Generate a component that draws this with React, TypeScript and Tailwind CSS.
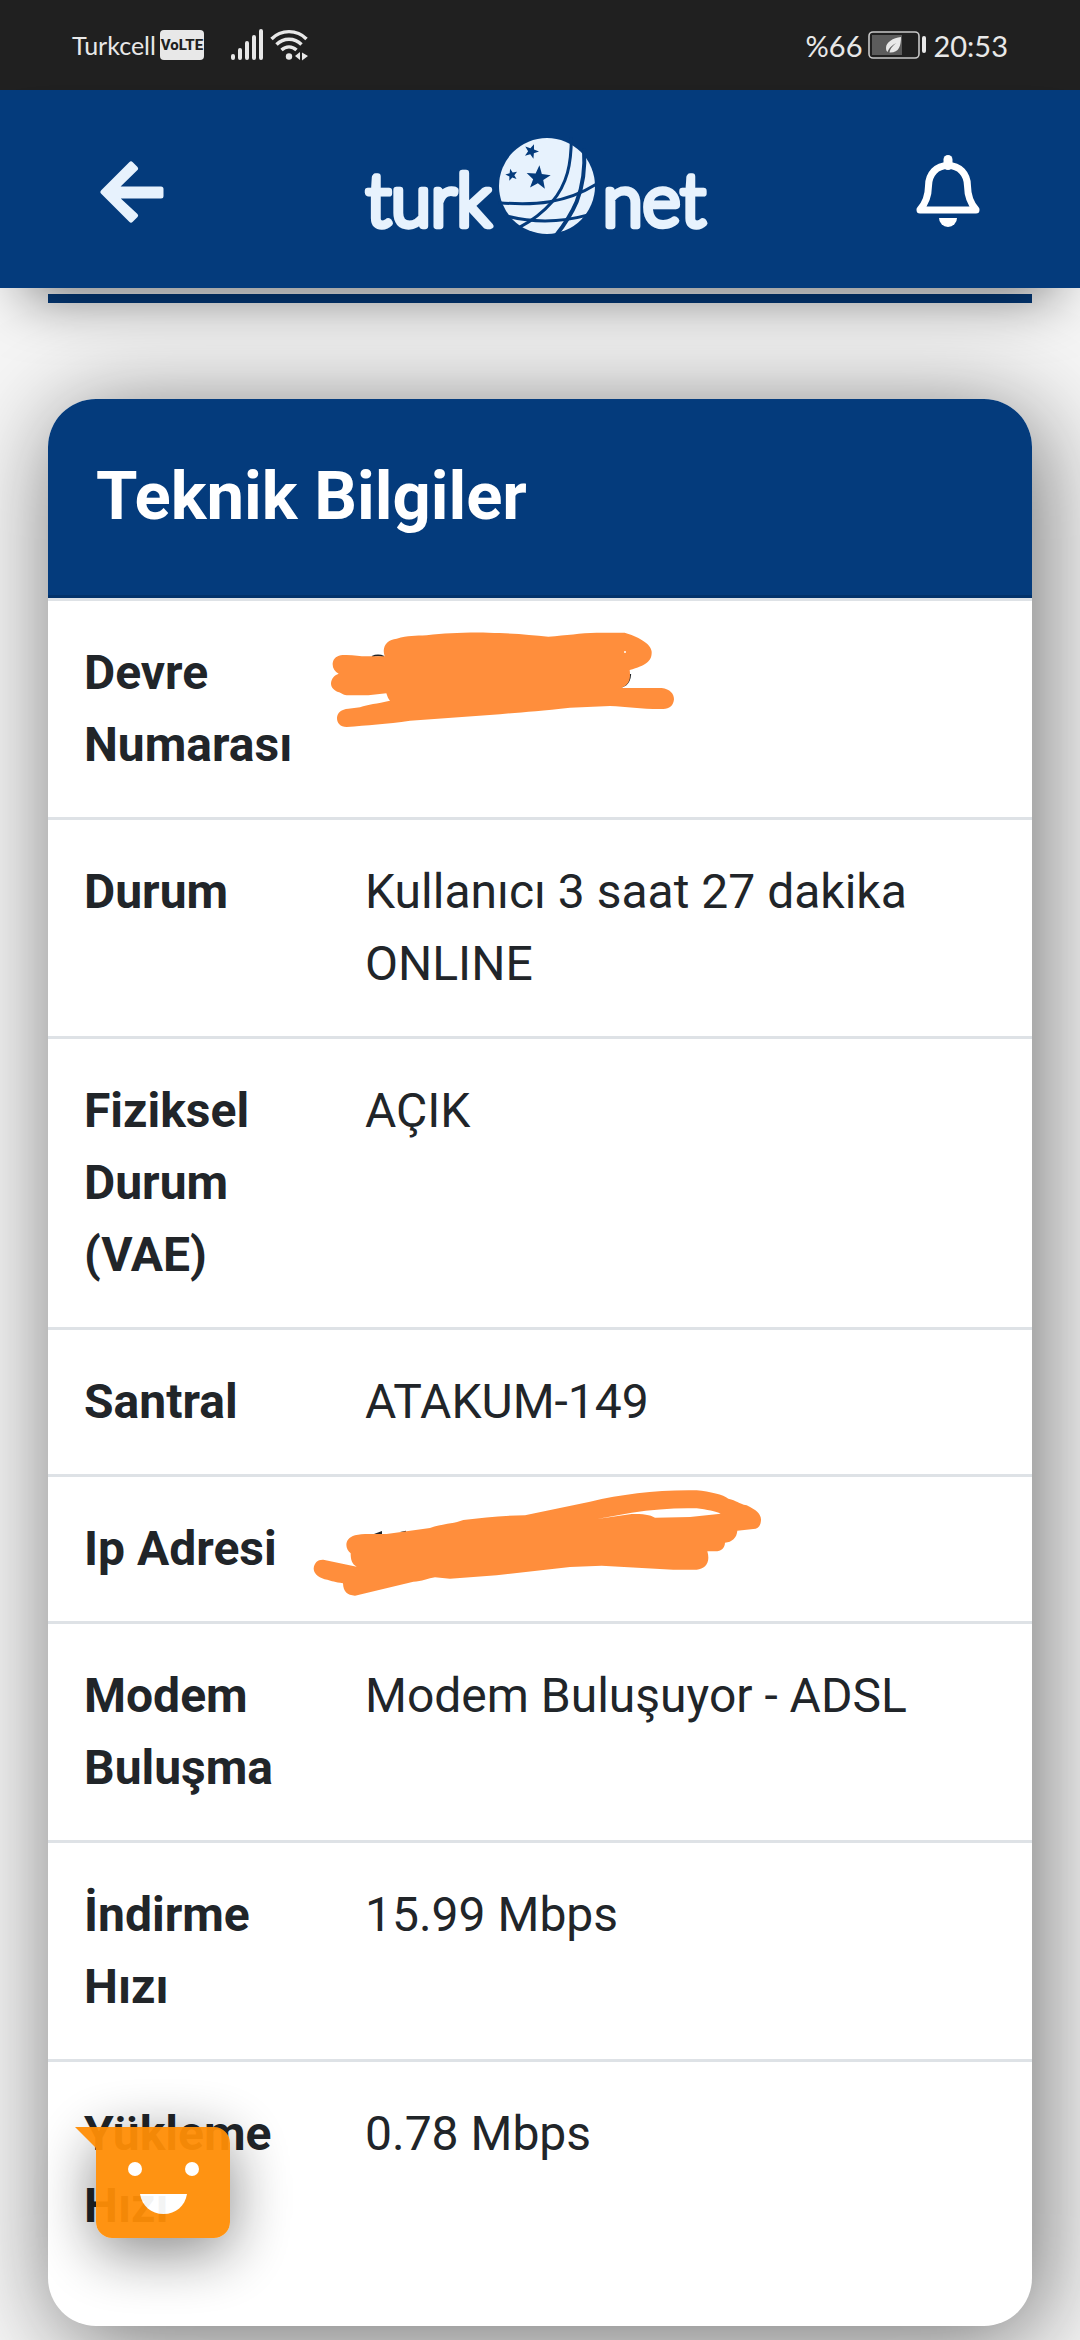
import React from 'react';

type Row = {
  label: string;
  value?: string;
  scribble?: 'circuit' | 'ip';
};

const rows: Row[] = [
  { label: 'Devre Numarası', scribble: 'circuit' },
  { label: 'Durum', value: 'Kullanıcı 3 saat 27 dakika ONLINE' },
  { label: 'Fiziksel Durum (VAE)', value: 'AÇIK' },
  { label: 'Santral', value: 'ATAKUM-149' },
  { label: 'Ip Adresi', scribble: 'ip' },
  { label: 'Modem Buluşma', value: 'Modem Buluşuyor - ADSL' },
  { label: 'İndirme Hızı', value: '15.99 Mbps' },
  { label: 'Yükleme Hızı', value: '0.78 Mbps' },
];

const starPoints = (cx: number, cy: number, r: number, tilt: number) =>
  Array.from({ length: 10 }, (_, i) => {
    const radius = i % 2 === 0 ? r : r * 0.42;
    const angle = ((i * 36 - 90 + tilt) * Math.PI) / 180;
    return `${(cx + radius * Math.cos(angle)).toFixed(1)},${(cy + radius * Math.sin(angle)).toFixed(1)}`;
  }).join(' ');

const SignalIcon = () => (
  <svg width="36" height="32" viewBox="0 0 36 32" stroke="#e8e8e8" strokeWidth="4" strokeLinecap="round" aria-hidden="true">
    <path d="M3 27v2M10 21v8M17 14v15M24 8v21M31 2v27" />
  </svg>
);

const WifiIcon = () => (
  <svg width="38" height="32" viewBox="0 0 38 32" fill="none" stroke="#e8e8e8" strokeWidth="3.4" aria-hidden="true">
    <path d="M1.5 10C11 .2 27 .2 36.500 10M6.500 15.500c7-7 18-7 25 0M11.500 21c4.500-4.200 10.500-4.200 15 0" />
    <circle cx="19" cy="27.500" r="3.200" fill="#e8e8e8" stroke="none" />
    <path d="M30 23v8l-5-4zM32 23.500l6 3.500-6 4.500z" fill="#e8e8e8" stroke="none" />
  </svg>
);

const BatteryIcon = () => (
  <svg width="59" height="28" viewBox="0 0 59 28" aria-hidden="true">
    <rect x="1" y="1" width="50" height="26" rx="4" fill="none" stroke="#c8c8c8" strokeWidth="1.600" />
    <rect x="4" y="4" width="30" height="20" fill="#5c5c5c" />
    <path d="M33 6c-8 1-15 5-15 11 0 2 .5 3 1.500 4 2-5 5-7 9-9-4 3-6 5-7 9.500C31 22 33 15 33 6z" fill="#e8e8e8" />
    <rect x="54" y="5" width="4" height="17" rx="2" fill="#e8e8e8" />
  </svg>
);

const BackIcon = () => (
  <svg width="64" height="64" viewBox="0 0 64 64" aria-hidden="true">
    <path
      d="M3 32 31 4l4.500 4.500L14.500 29H61v7H14.500l21 19.500L31 60z"
      fill="#e7f2fd"
      stroke="#e7f2fd"
      strokeWidth="5"
      strokeLinejoin="round"
    />
  </svg>
);

const BellIcon = () => (
  <svg width="64" height="74" viewBox="0 0 64 74" aria-hidden="true">
    <path
      d="M4 54.500C9 49 12.300 43 12.500 31c0-12 8-20.500 19.500-20.500S51.500 19 51.500 31C51.700 43 55 49 60 54.500v.5H4z"
      fill="none"
      stroke="#fff"
      strokeWidth="7"
      strokeLinejoin="round"
    />
    <path d="M32 4.500v6" stroke="#fff" strokeWidth="9" strokeLinecap="round" />
    <path d="M23 63h18a9 9 0 0 1-18 0z" fill="#fff" />
  </svg>
);

const Logo = () => (
  <svg width="352" height="112" viewBox="72 48 1056 336" className="overflow-visible" role="img" aria-label="turknet">
    <g
      fill="#e7f2fd"
      stroke="#e7f2fd"
      strokeWidth="19"
      strokeLinejoin="round"
      fontFamily="Lato, sans-serif"
      fontWeight="300"
      fontSize="218"
    >
      <text x="78" y="317">turk</text>
      <text x="788" y="317">net</text>
    </g>
    <circle cx="621" cy="198" r="144" fill="#e7f2fd" />
    <g fill="none" stroke="#043b7c" strokeWidth="9">
      <path d="M694 52c0 80-12 140-58 194-26 30-56 54-98 76" />
      <path d="M732 85c4 60-4 115-22 160-16 38-36 68-64 104" strokeWidth="12" />
      <path d="M476 248c110 9 200 2 294-56" />
      <path d="M492 286c80 22 170 22 256-2" />
    </g>
    <g fill="#043b7c">
      <polygon points={starPoints(595, 174, 38, 5)} />
      <polygon points={starPoints(574, 94, 23, 20)} />
      <polygon points={starPoints(515, 165, 19, -14)} />
    </g>
  </svg>
);

const CircuitScribble = () => (
  <svg className="absolute left-0 top-[30px]" width="347" height="100" viewBox="87 93 1041 300" aria-hidden="true">
    <path d="M216 170q18-8 36 0M944 260q44 6 47-38" fill="none" stroke="#212529" strokeWidth="5" />
    <path
      d="M128 165C160 163 180 170 205 169L254 169C244 140 262 118 290 116C325 106 345 108 380 106C440 100 480 97 565 98C640 100 690 104 745 110C800 106 840 99 890 98L974 98C1010 108 1054 130 1055 155C1056 182 1040 196 989 210C992 235 990 252 964 264L1085 264C1110 268 1122 280 1122 298C1120 318 1108 326 1090 327C1030 328 980 320 930 318L810 323C720 334 660 336 600 343L330 362C260 372 200 376 140 381C120 380 111 370 111 354C112 336 124 328 145 326L180 322C205 312 230 312 270 302C264 296 262 288 259 280L205 286L140 286C128 285 124 278 114 276C100 270 93 262 93 250C94 236 102 226 116 221C104 214 97 204 98 190C100 174 112 166 128 165Z"
      fill="#ff8e3c"
    />
    <circle cx="975" cy="156" r="3" fill="#fff" />
  </svg>
);

const IpScribble = () => (
  <svg className="absolute -left-4 top-[10px]" width="450" height="110" viewBox="69 51 1350 330" aria-hidden="true">
    <path d="M252 192l24-9v12zM330 186l18-4v6z" fill="#212529" />
    <path
      d="M195 196C215 190 235 192 290 192L420 174C460 160 490 162 520 150C580 144 640 136 705 136L900 95C1000 72 1100 59 1220 61C1260 65 1300 74 1315 86C1340 92 1345 100 1370 106C1400 120 1414 134 1413 150C1412 168 1404 177 1390 177L1342 182C1340 204 1326 216 1305 218C1304 234 1295 244 1275 244L1252 244C1262 278 1246 296 1220 299L1150 299L935 287L840 291L620 316L480 326L435 322C415 325 395 335 370 335L195 377C172 376 160 366 159 340C135 335 125 334 112 329C90 325 72 314 71 296C72 278 84 268 100 269L200 290C186 283 182 270 182 250C164 236 162 206 195 196Z"
      fill="#ff8e3c"
    />
    <path d="M1025 128C1090 118 1160 113 1220 115C1250 119 1278 124 1292 131L1200 141L1095 143C1080 134 1060 132 1025 132L921 147Z" fill="#fff" />
  </svg>
);

const StatusBar = () => (
  <div className="flex h-[90px] items-center justify-between bg-[#202020] px-[72px] font-['Lato',sans-serif] text-[#e8e8e8]">
    <div className="flex items-center">
      <span className="text-[25px] leading-none">Turkcell</span>
      <span className="ml-1 flex h-[30px] w-11 items-center justify-center rounded bg-[#e8e8e8] font-['Roboto',sans-serif] text-[15px] font-extrabold leading-none text-[#202020]">
        VoLTE
      </span>
      <div className="ml-[26px] flex items-center gap-1">
        <SignalIcon />
        <WifiIcon />
      </div>
    </div>
    <div className="flex items-center gap-1.5 text-[29px] leading-none">
      <span>%66</span>
      <BatteryIcon />
      <span>20:53</span>
    </div>
  </div>
);

const ChatButton = () => (
  <button
    type="button"
    aria-label="Sohbet"
    className="fixed bottom-[102px] left-[75px] z-20 flex h-[111px] w-[155px] pl-[21px] opacity-95"
  >
    <span className="h-full w-full rounded-2xl shadow-[0_14px_60px_rgba(0,0,0,0.5)]" />
    <svg className="absolute inset-0" width="155" height="111" viewBox="0 0 155 111" aria-hidden="true">
      <path d="M0 0h139a16 16 0 0 1 16 16v79a16 16 0 0 1-16 16H37a16 16 0 0 1-16-16V21z" fill="#ff8e06" />
      <circle cx="60" cy="42" r="7" fill="#fff" />
      <circle cx="117" cy="42" r="7" fill="#fff" />
      <path d="M65 67h47c-2 12-11 20-23.500 20S67 79 65 67z" fill="#fff" />
    </svg>
  </button>
);

export default function App() {
  return (
    <div className="min-h-screen bg-[#f6f6f6] pb-[14px] font-['Roboto',sans-serif] text-[#212529]">
      <div className="relative z-10">
        <StatusBar />
        <header className="flex h-[198px] items-center justify-between bg-[#043b7c] px-[100px] pt-[6px] shadow-[0_36px_56px_-26px_rgba(0,0,0,0.5)]">
          <button type="button" aria-label="Geri">
            <BackIcon />
          </button>
          <Logo />
          <button type="button" aria-label="Bildirimler">
            <BellIcon />
          </button>
        </header>
      </div>

      <main className="px-12">
        <div className="mt-[6px] h-[9px] bg-[#043b7c]" />

        <section className="mt-24 rounded-[48px] bg-white pb-12 shadow-[8px_14px_100px_rgba(0,0,0,0.55)]">
          <h2 className="rounded-t-[48px] border-b-[3px] border-[#03326a] bg-[#043b7c] px-12 pb-[59px] pt-[57px] text-[67px] font-bold leading-[80px] text-white">
            Teknik Bilgiler
          </h2>
          <table className="w-full table-fixed border-separate border-spacing-0 text-left text-[48px] leading-[72px]">
            <tbody>
              {rows.map((row) => (
                <tr key={row.label} className="align-top">
                  <th scope="row" className="w-[281px] border-t-[3px] border-[#dee2e6] p-9 font-bold">
                    {row.label}
                  </th>
                  <td className="relative border-t-[3px] border-[#dee2e6] p-9">
                    {row.value}
                    {row.scribble === 'circuit' && <CircuitScribble />}
                    {row.scribble === 'ip' && <IpScribble />}
                  </td>
                </tr>
              ))}
            </tbody>
          </table>
        </section>
      </main>

      <ChatButton />
    </div>
  );
}
